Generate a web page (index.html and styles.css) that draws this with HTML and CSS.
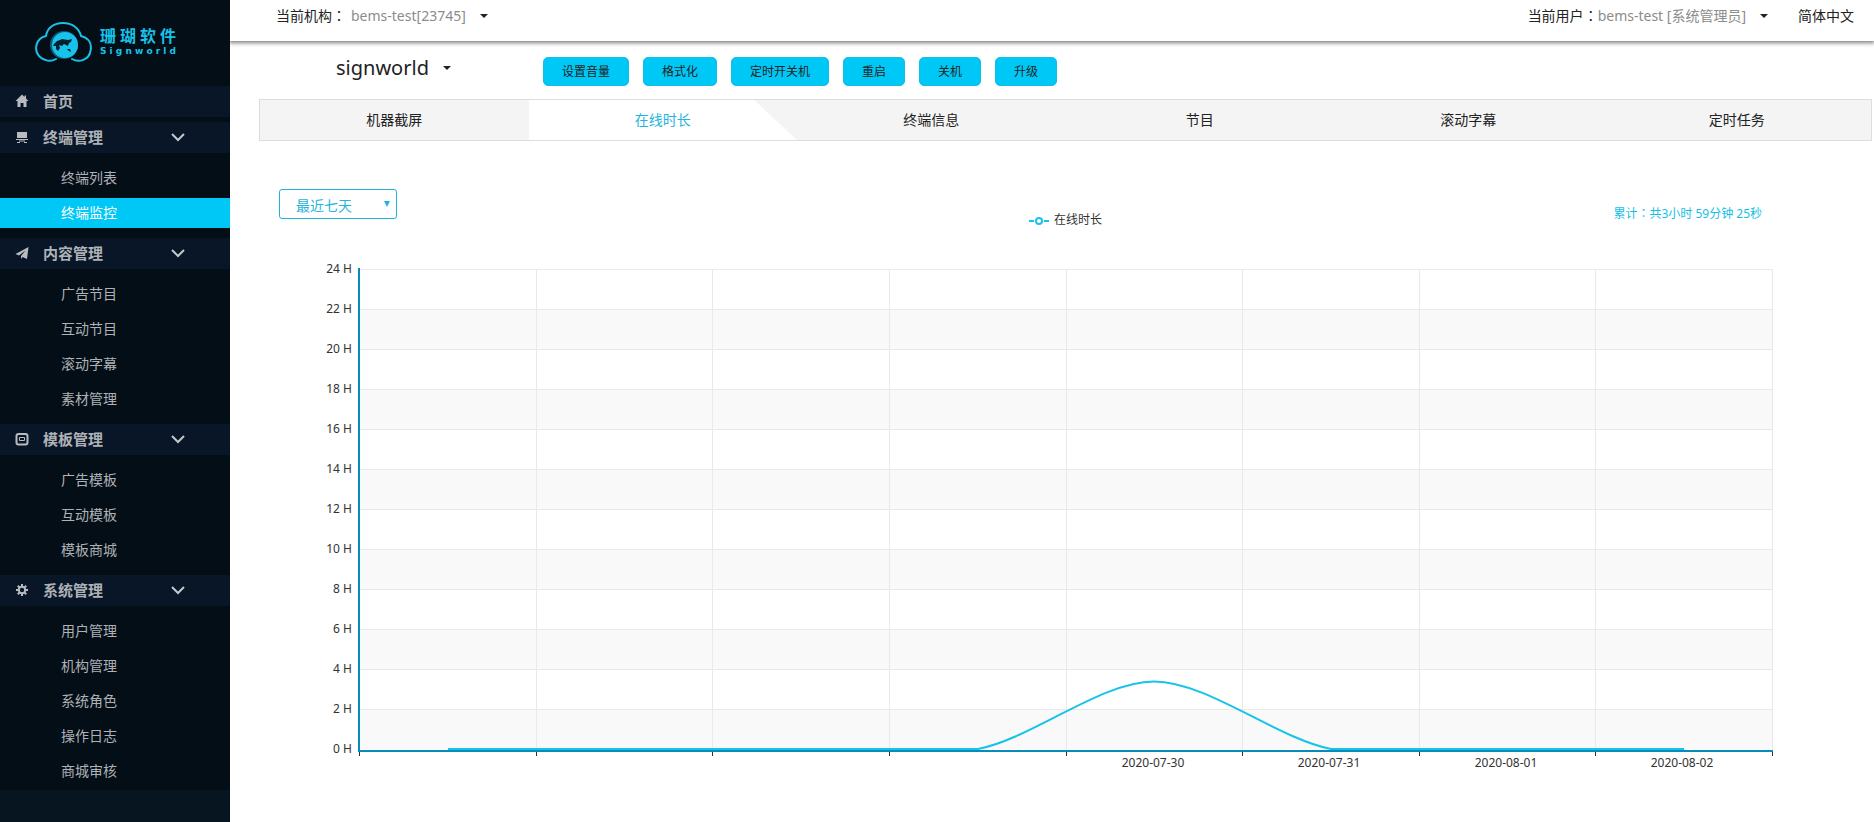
FILE: index.html
```html
<!DOCTYPE html>
<html lang="zh-CN">
<head>
    <meta charset="UTF-8">
    <meta name="viewport" content="width=device-width, initial-scale=1.0">
    <title>终端监控</title>
    <link rel="stylesheet" href="styles.css">
</head>
<body>
<aside class="sidebar">
    <div class="logo">
        <svg class="logo-icon" viewBox="0 0 57 42">
            <g fill="none" stroke="#17c3ea" stroke-width="2" stroke-linecap="round">
                <path d="M21 38C16 41 9 40 5 36C-2 29 1 17 11 15C12 7 19 2 28 2C37 2 44 7 46 15C54 17 57 23 55.500 30C54 39 44 42 37 38"/>
            </g>
            <circle cx="29" cy="24" r="14" fill="#0b5f7e"/>
            <circle cx="30" cy="24" r="13" fill="#17c3ea"/>
            <path fill="#04202f" d="M19 23L22 20L25 19L27 18L33 19L37 18L36 21L34 22L33 25L31 24L29 23L27 25L24 24L25 27L23 30L21 28L21 25L18 25ZM32 28L35 28L36 31L34 30Z"/>
        </svg>
        <div class="logo-text">
            <div class="logo-name"><span>珊</span><span>瑚</span><span>软</span><span>件</span></div>
            <div class="logo-sub"><span>S</span><span>i</span><span>g</span><span>n</span><span>w</span><span>o</span><span>r</span><span>l</span><span>d</span></div>
        </div>
    </div>
    <nav class="menu">
        <a class="menu-head menu-home" href="#">
            <svg class="menu-icon" viewBox="0 0 14 14"><path d="M7 0.500L0.500 7H2.500V13H5.500V9H8.500V13H11.500V7H13.500L11 4.500V1.500H9.500V3Z"/></svg>
            首页
        </a>

        <button class="menu-head" type="button">
            <svg class="menu-icon" viewBox="0 0 14 14"><path d="M2 2H12V8H2ZM1 9H13V10H1ZM4 10.500H10V11.500H4ZM2 12H5V13H2ZM9 12H12V13H9Z"/></svg>
            终端管理
            <svg class="chevron" viewBox="0 0 14 9"><path d="M1 1L7 7L13 1"/></svg>
        </button>
        <ul class="submenu">
            <li><a href="#">终端列表</a></li>
            <li><a class="active" href="#">终端监控</a></li>
        </ul>

        <button class="menu-head" type="button">
            <svg class="menu-icon" viewBox="0 0 14 14"><path d="M13.500 1L0.500 8L4 9.500L10.500 4.500L6 10V13L7.500 11L12 13Z"/></svg>
            内容管理
            <svg class="chevron" viewBox="0 0 14 9"><path d="M1 1L7 7L13 1"/></svg>
        </button>
        <ul class="submenu">
            <li><a href="#">广告节目</a></li>
            <li><a href="#">互动节目</a></li>
            <li><a href="#">滚动字幕</a></li>
            <li><a href="#">素材管理</a></li>
        </ul>

        <button class="menu-head" type="button">
            <svg class="menu-icon menu-icon-line" viewBox="0 0 14 14"><rect x="1.500" y="2" width="11" height="10.500" rx="2" stroke-width="2"/><path d="M4.500 5.500H9.500V8.500H4.500Z" stroke-width="1"/></svg>
            模板管理
            <svg class="chevron" viewBox="0 0 14 9"><path d="M1 1L7 7L13 1"/></svg>
        </button>
        <ul class="submenu">
            <li><a href="#">广告模板</a></li>
            <li><a href="#">互动模板</a></li>
            <li><a href="#">模板商城</a></li>
        </ul>

        <button class="menu-head" type="button">
            <svg class="menu-icon menu-icon-line" viewBox="0 0 14 14"><circle cx="7" cy="7" r="3.200" stroke-width="2"/><path d="M7 1V3M7 11V13M1 7H3M11 7H13M2.800 2.800L4.500 4.500M9.500 9.500L11.200 11.200M11.200 2.800L9.500 4.500M4.500 9.500L2.800 11.200" stroke-width="2"/></svg>
            系统管理
            <svg class="chevron" viewBox="0 0 14 9"><path d="M1 1L7 7L13 1"/></svg>
        </button>
        <ul class="submenu">
            <li><a href="#">用户管理</a></li>
            <li><a href="#">机构管理</a></li>
            <li><a href="#">系统角色</a></li>
            <li><a href="#">操作日志</a></li>
            <li><a href="#">商城审核</a></li>
        </ul>
    </nav>
</aside>

<div class="main">
    <header class="topbar">
        <span>当前机构<span class="colon" lang="zh-TW">：</span></span>
        <button class="dropdown org" type="button">bems-test[23745]<i class="caret"></i></button>
        <span class="topbar-user">当前用户<span class="colon" lang="zh-TW">：</span></span>
        <button class="dropdown" type="button">bems-test [系统管理员]<i class="caret"></i></button>
        <a class="lang" href="#">简体中文</a>
    </header>

    <div class="terminal">
        <button class="terminal-name" type="button">signworld<i class="caret"></i></button>
        <div class="actions">
            <button class="btn" type="button">设置音量</button>
            <button class="btn" type="button">格式化</button>
            <button class="btn" type="button">定时开关机</button>
            <button class="btn" type="button">重启</button>
            <button class="btn" type="button">关机</button>
            <button class="btn" type="button">升级</button>
        </div>
    </div>

    <nav class="tabs">
        <a class="tab" href="#">机器截屏</a>
        <a class="tab tab-active" href="#">在线时长</a>
        <a class="tab" href="#">终端信息</a>
        <a class="tab" href="#">节目</a>
        <a class="tab" href="#">滚动字幕</a>
        <a class="tab" href="#">定时任务</a>
    </nav>

    <section class="report">
        <div class="report-bar">
            <div class="range">
                <select class="range-select" aria-label="时间范围">
                    <option>最近七天</option>
                </select>
            </div>
            <div class="total">累计<span class="colon" lang="zh-TW">：</span>共3小时 59分钟 25秒</div>
        </div>

        <svg class="chart" viewBox="0 0 1644 580">
            <!-- legend -->
            <g class="legend">
                <path d="M799 13H804M814 13H819"/>
                <circle cx="809" cy="13" r="3"/>
                <text x="824" y="16">在线时长</text>
            </g>

            <!-- split areas -->
            <g fill="#f9f9f9">
                <rect x="129" y="101" width="1413" height="40"/>
                <rect x="129" y="181" width="1413" height="40"/>
                <rect x="129" y="261" width="1413" height="40"/>
                <rect x="129" y="341" width="1413" height="40"/>
                <rect x="129" y="421" width="1413" height="40"/>
                <rect x="129" y="501" width="1413" height="40"/>
            </g>

            <!-- grid -->
            <path class="grid" d="M129 61.500H1542M129 101.500H1542M129 141.500H1542M129 181.500H1542M129 221.500H1542M129 261.500H1542M129 301.500H1542M129 341.500H1542M129 381.500H1542M129 421.500H1542M129 461.500H1542M129 501.500H1542"/>
            <path class="grid" d="M306.500 61V542M482.500 61V542M659.500 61V542M836.500 61V542M1012.500 61V542M1189.500 61V542M1365.500 61V542M1542.500 61V542"/>

            <path class="ticks" d="M129.500 543V548M306.500 543V548M482.500 543V548M659.500 543V548M836.500 543V548M1012.500 543V548M1189.500 543V548M1365.500 543V548M1542.500 543V548"/>
            <path class="series" d="M218 541H748C801 531 871 473.500 924 473.500C977 473.500 1048 531 1101 541H1454"/>
            <path class="axis" d="M129 60V543H1543"/>

            <g class="labels labels-y">
                <text x="122" y="65">24 H</text>
                <text x="122" y="105">22 H</text>
                <text x="122" y="145">20 H</text>
                <text x="122" y="185">18 H</text>
                <text x="122" y="225">16 H</text>
                <text x="122" y="265">14 H</text>
                <text x="122" y="305">12 H</text>
                <text x="122" y="345">10 H</text>
                <text x="122" y="385">8 H</text>
                <text x="122" y="425">6 H</text>
                <text x="122" y="465">4 H</text>
                <text x="122" y="505">2 H</text>
                <text x="122" y="545">0 H</text>
            </g>
            <g class="labels labels-x">
                <text x="923" y="559">2020-07-30</text>
                <text x="1099" y="559">2020-07-31</text>
                <text x="1276" y="559">2020-08-01</text>
                <text x="1452" y="559">2020-08-02</text>
            </g>
        </svg>
    </section>
</div>
</body>
</html>
```

FILE: styles.css
```css
* {
    box-sizing: border-box;
}

body {
    margin: 0;
    display: flex;
    min-height: 100vh;
    font-family: "Noto Sans", "Noto Sans CJK SC", sans-serif;
    font-size: 14px;
    line-height: 20px;
    color: #222;
    background: #fff;
}

a {
    color: inherit;
    text-decoration: none;
}

button {
    font: inherit;
    color: inherit;
    border: none;
    background: none;
    padding: 0;
    cursor: pointer;
}

/* centred full-width colon */
.colon {
    font-family: "Noto Sans CJK TC", sans-serif;
    line-height: 1;
}

/* sidebar */
.sidebar {
    flex: none;
    width: 230px;
    background: #071521;
}

.logo {
    display: flex;
    align-items: center;
    gap: 8px;
    height: 86px;
    padding: 0 0 2px 35px;
    background: #040e17;
    color: #17c3ea;
}

.logo-icon {
    width: 57px;
    height: 42px;
}

.logo-text {
    width: 76px;
}

.logo-name,
.logo-sub {
    display: flex;
    justify-content: space-between;
}

.logo-name {
    font-size: 16px;
    font-weight: bold;
    line-height: 18px;
}

.logo-sub {
    font-family: "DejaVu Sans", sans-serif;
    font-size: 9px;
    font-weight: bold;
    line-height: 12px;
}

.menu {
    background: #040e17;
}

.menu-head {
    display: flex;
    align-items: center;
    width: 100%;
    height: 31px;
    padding: 0 45px 1px 15px;
    font-size: 15px;
    font-weight: bold;
    color: #aeb2b6;
    background: #081627;
}

.menu-home {
    margin-bottom: 5px;
}

.menu-icon {
    width: 14px;
    height: 14px;
    margin-right: 14px;
    fill: #b8bcc0;
}

.menu-icon-line {
    fill: none;
    stroke: #b8bcc0;
}

.chevron {
    width: 14px;
    height: 9px;
    margin-left: auto;
    fill: none;
    stroke: #c4c8cc;
    stroke-width: 2;
}

.submenu {
    list-style: none;
    margin: 0;
    padding: 10px 0;
    display: flex;
    flex-direction: column;
    gap: 5px;
}

.submenu:last-child {
    padding-bottom: 4px;
}

.submenu a {
    display: block;
    padding-left: 61px;
    line-height: 30px;
    color: #aeb2b6;
}

.submenu .active {
    color: #fff;
    background: #00c8f6;
}

/* top bar */
.main {
    flex: 1;
    min-width: 0;
}

.topbar {
    display: flex;
    align-items: center;
    height: 41px;
    padding: 0 20px 9px 46px;
    box-shadow: 0 1px 4px 1px rgba(0, 0, 0, 0.5);
    clip-path: inset(0 0 -8px 0);
}

.dropdown {
    display: flex;
    align-items: center;
    gap: 14px;
    color: #8c8c8c;
}

.org {
    margin-left: 5px;
}

.topbar-user {
    margin-left: auto;
}

.lang {
    margin-left: 30px;
}

.caret {
    border: 4px solid transparent;
    border-top-color: #222;
    border-bottom: none;
}

/* terminal name and actions */
.terminal {
    display: flex;
    align-items: flex-start;
    padding: 16px 0 13px 106px;
}

.terminal-name {
    display: flex;
    align-items: center;
    gap: 14px;
    width: 207px;
    font-size: 20px;
    line-height: 22px;
}

.actions {
    display: flex;
    gap: 14px;
}

.btn {
    height: 29px;
    padding: 0 18px;
    font-size: 12px;
    border: 1px solid #14bfe6;
    border-radius: 5px;
    background: #00c8f6;
}

/* tabs */
.tabs {
    display: flex;
    height: 42px;
    margin: 0 2px 0 29px;
    border: 1px solid #ddd;
    background: #f4f4f4;
}

.tab {
    flex: 1;
    line-height: 40px;
    text-align: center;
}

.tab-active {
    color: #1fb5dd;
    background: #fff;
    clip-path: polygon(0 0, 84% 0, 100% 100%, 0 100%);
}

/* online time report */
.report {
    padding-top: 48px;
}

.report-bar {
    display: flex;
    justify-content: space-between;
    align-items: flex-start;
    height: 33px;
    padding: 0 112px 0 49px;
}

.range {
    position: relative;
    width: 118px;
}

.range::after {
    content: "";
    position: absolute;
    top: 12px;
    right: 7px;
    border: 3px solid transparent;
    border-top: 6px solid #1fb5dd;
    border-bottom: none;
}

.range-select {
    appearance: none;
    width: 100%;
    height: 30px;
    padding: 3px 16px 0;
    font: inherit;
    color: #1fb5dd;
    border: 1px solid #1fb5dd;
    border-radius: 3px;
    background: #fff;
}

.total {
    align-self: flex-end;
    font-size: 12px;
    line-height: 16px;
    color: #14bfe6;
}

.chart {
    display: block;
    width: 100%;
    margin-top: -14px;
    pointer-events: none;
}

.legend {
    font-size: 12px;
}

.legend path,
.legend circle {
    fill: none;
    stroke: #17c3ea;
    stroke-width: 2;
}

.legend text,
.labels {
    fill: #333;
}

.labels {
    font-size: 12px;
}

.labels-y {
    text-anchor: end;
}

.labels-x {
    text-anchor: middle;
}

.grid,
.ticks,
.series,
.axis {
    fill: none;
}

.grid {
    stroke: #e9e9e9;
}

.ticks {
    stroke: #333;
}

.series {
    stroke: #17c3ea;
    stroke-width: 2;
}

.axis {
    stroke: #088abb;
    stroke-width: 2;
}
```
